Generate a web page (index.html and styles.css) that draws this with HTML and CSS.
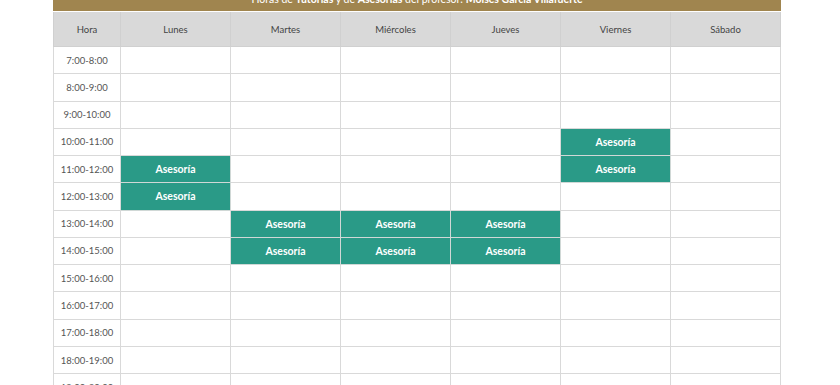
FILE: index.html
```html
<!DOCTYPE html>
<html lang="es">
<head>
<meta charset="utf-8">
<title>Horario</title>
<link rel="stylesheet" href="styles.css">
</head>
<body>
<div class="wrap">
  <div class="banner">Horas de <b>Tutorías</b> y de <b>Asesorías</b> del profesor: <b>Moisés García Villafuerte</b></div>
  <table class="sched">
    <colgroup>
      <col class="c-hora"><col class="c-day"><col class="c-day"><col class="c-day"><col class="c-day"><col class="c-day"><col class="c-day">
    </colgroup>
    <thead>
      <tr><th>Hora</th><th>Lunes</th><th>Martes</th><th>Miércoles</th><th>Jueves</th><th>Viernes</th><th>Sábado</th></tr>
    </thead>
    <tbody>
      <tr><td class="t">7:00-8:00</td><td></td><td></td><td></td><td></td><td></td><td></td></tr>
      <tr><td class="t">8:00-9:00</td><td></td><td></td><td></td><td></td><td></td><td></td></tr>
      <tr><td class="t">9:00-10:00</td><td></td><td></td><td></td><td></td><td></td><td></td></tr>
      <tr><td class="t">10:00-11:00</td><td></td><td></td><td></td><td></td><td class="a">Asesoría</td><td></td></tr>
      <tr><td class="t">11:00-12:00</td><td class="a">Asesoría</td><td></td><td></td><td></td><td class="a">Asesoría</td><td></td></tr>
      <tr><td class="t">12:00-13:00</td><td class="a">Asesoría</td><td></td><td></td><td></td><td></td><td></td></tr>
      <tr><td class="t">13:00-14:00</td><td></td><td class="a">Asesoría</td><td class="a">Asesoría</td><td class="a">Asesoría</td><td></td><td></td></tr>
      <tr><td class="t">14:00-15:00</td><td></td><td class="a">Asesoría</td><td class="a">Asesoría</td><td class="a">Asesoría</td><td></td><td></td></tr>
      <tr><td class="t">15:00-16:00</td><td></td><td></td><td></td><td></td><td></td><td></td></tr>
      <tr><td class="t">16:00-17:00</td><td></td><td></td><td></td><td></td><td></td><td></td></tr>
      <tr><td class="t">17:00-18:00</td><td></td><td></td><td></td><td></td><td></td><td></td></tr>
      <tr><td class="t">18:00-19:00</td><td></td><td></td><td></td><td></td><td></td><td></td></tr>
      <tr><td class="t">19:00-20:00</td><td></td><td></td><td></td><td></td><td></td><td></td></tr>
    </tbody>
  </table>
</div>
</body>
</html>
```
FILE: styles.css
```css
html, body {
  margin: 0;
  padding: 0;
  background: #ffffff;
  overflow: hidden;
}
body {
  font-family: Lato, "Open Sans", sans-serif;
  color: #555;
}
.wrap {
  width: 728px;
  margin-left: 53px;
  margin-top: -16px;
}
.banner {
  background: #a0854f;
  color: #fff;
  height: 24px;
  padding-top: 3px;
  line-height: 24px;
  font-size: 10.5px;
  text-align: center;
}
.banner b { font-weight: 700; }
.sched {
  width: 728px;
  border-collapse: collapse;
  table-layout: fixed;
  margin-top: 1px;
}
.c-hora { width: 67px; }
.c-day { width: 110px; }
.sched th {
  background: #d9d9d9;
  height: 34px;
  font-weight: 400;
  font-size: 9.5px;
  color: #444;
  border: 1px solid #d0d0d0;
  border-top: none;
  padding: 0;
  text-align: center;
}
.sched td {
  height: 27.27px;
  padding: 0;
  border: 1px solid #d9d9d9;
  text-align: center;
  font-size: 9.5px;
  box-sizing: border-box;
}
.sched td.t {
  color: #555;
}
.sched td.a {
  background: #2a9a87;
  color: #fff;
  font-weight: 700;
  font-size: 10.5px;
  border-color: #d0d8d6;
}
```
